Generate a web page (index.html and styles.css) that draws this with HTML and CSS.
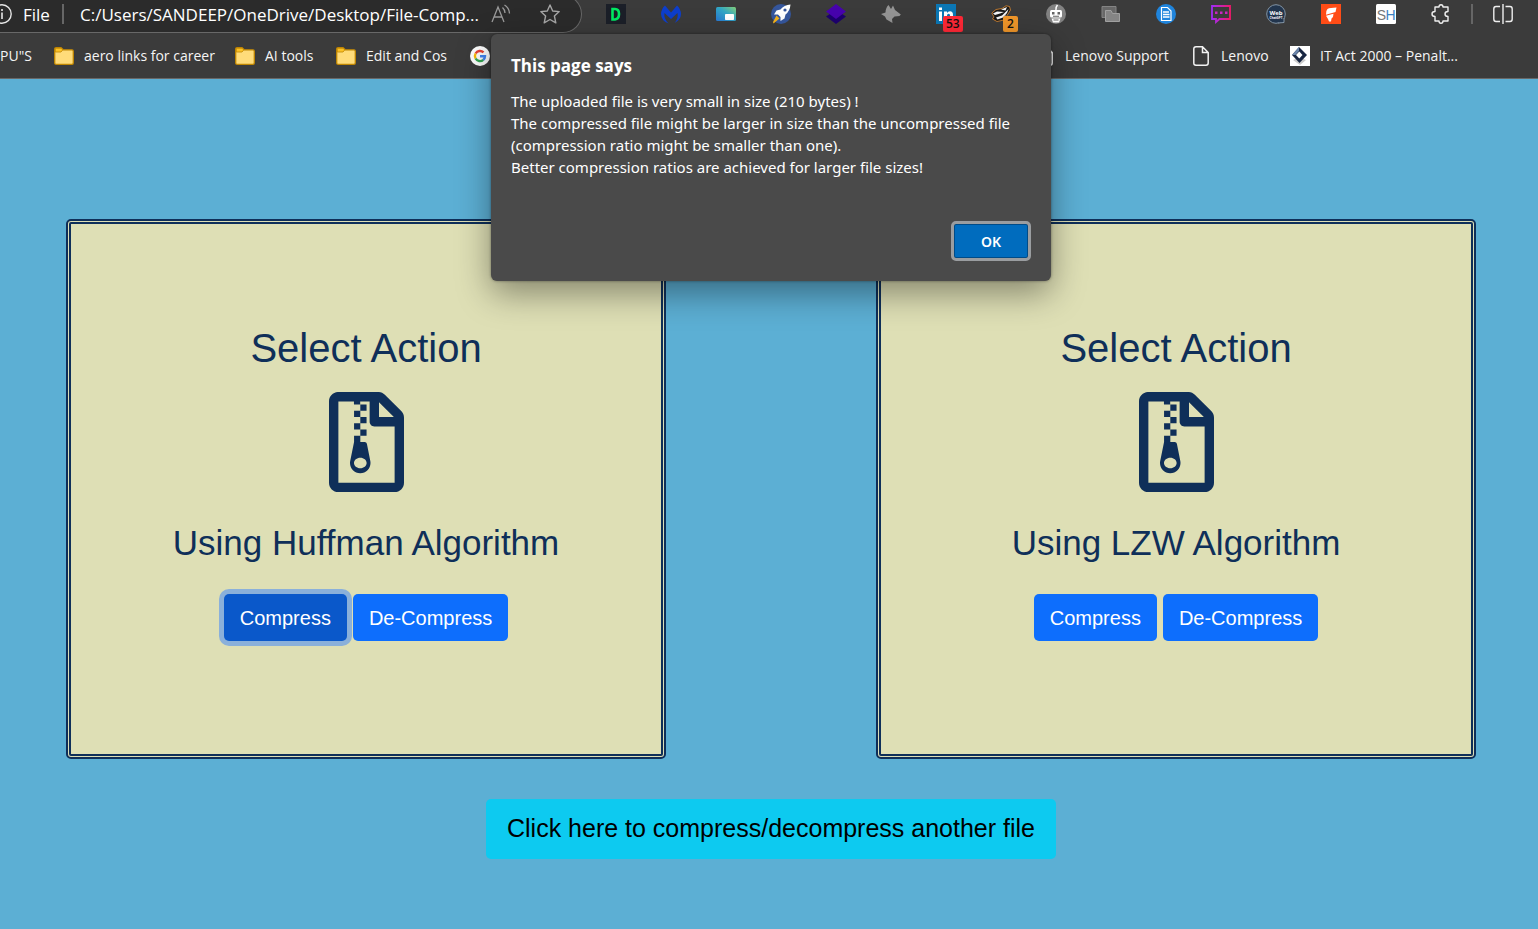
FILE: index.html
```html
<!DOCTYPE html>
<html lang="en">
<head>
<meta charset="utf-8">
<title>File Compressor</title>
<link rel="stylesheet" href="styles.css">
</head>
<body>
<svg class="defs" aria-hidden="true">
  <defs>
    <symbol id="folder" viewBox="0 0 20 18">
      <path d="M.7 2.200Q.7.700 2.200.7H7L9.200 2.800H18Q19.300 2.800 19.300 4.200V16Q19.300 17.300 18 17.300H2.200Q.7 17.300.7 16Z" fill="#ffdc7a" stroke="#bf8500" stroke-width="1.300"/>
      <path d="M1.300 1.300H7.500L8.700 3 7 5H1.300Z" fill="#fcc226" stroke="#bf8500" stroke-width=".8"/>
    </symbol>
    <symbol id="doc" viewBox="0 0 16 20">
      <path d="M3 .8H9.500L15.200 6.500V17Q15.200 19.200 13 19.200H3Q.8 19.200.8 17V3Q.8.800 3 .8ZM9.500.800V6.500H15.200" fill="none" stroke="#f2f2f2" stroke-width="1.500"/>
    </symbol>
    <symbol id="archive" viewBox="0 0 384 512">
      <path fill="currentColor" d="M128.3 160v32h32v-32zm64-96h-32v32h32zm-64 32v32h32V96zm64 32h-32v32h32zm177.600-30.100L286 14C277 5 264.800-.1 252.100-.1H48C21.500 0 0 21.500 0 48v416c0 26.500 21.500 48 48 48h288c26.500 0 48-21.500 48-48V131.900c0-12.700-5.100-25-14.100-34zM256 51.900l76.100 76.100H256zM336 464H48V48h79.700v16h32V48H208v104c0 13.300 10.700 24 24 24h104zM194.200 265.700c-1.100-5.600-6-9.700-11.800-9.700h-22.100v-32h-32v32l-19.700 97.100C102 385.600 126.800 416 160 416c33.100 0 57.900-30.200 51.500-62.600zm-33.900 124.400c-17.900 0-32.400-12.100-32.400-27s14.500-27 32.400-27 32.400 12.100 32.400 27-14.500 27-32.400 27zm32-198.100h-32v32h32z"/>
    </symbol>
  </defs>
</svg>

<header class="browser">
  <div class="toolbar">
    <div class="address">
      <svg class="ico" viewBox="0 0 20 20"><circle cx="10" cy="10" r="9.200" fill="none" stroke="#e6e6e6" stroke-width="1.400"/><path d="M10 8.500V15M10 5V7" stroke="#e6e6e6" stroke-width="1.600"/></svg>
      <span class="scheme">File</span>
      <span class="bar"></span>
      <span class="url">C:/Users/SANDEEP/OneDrive/Desktop/File-Comp...</span>
      <svg class="ico" viewBox="0 0 20 20" fill="none" stroke="#9a9a9a" stroke-width="1.300"><path d="M1 18 7 3 13 18M3.200 13H10.800M11.500 3.500Q13.800 5.500 14 9M13.500 1Q18.300 4 18.500 9.500"/></svg>
      <svg class="ico star" viewBox="0 0 20 20" fill="none" stroke="#a6a6a6" stroke-width="1.400" stroke-linejoin="round"><path d="M10 1 12.700 7 19.200 7.600 14.400 12 15.800 18.800 10 15.500 4.200 18.800 5.600 12 .8 7.600 7.300 7Z"/></svg>
    </div>
    <div class="extensions">
      <svg class="ico" viewBox="0 0 20 20"><path fill="#1b1f28" d="M0 0H20V20H0Z"/><path d="M6.500 5H9Q13 5 13 10T9 15.500H6.500Z" fill="none" stroke="#00ea62" stroke-width="2.600"/></svg>
      <svg class="ico" viewBox="0 0 20 20"><path fill="#0d3ecc" d="M4 1.500 10 8.500 16 1.500Q19.800 5 20 10 19.800 16 13.500 19 17.500 14.500 16.500 9L10 15 3.500 9Q2.500 14.500 7.500 19.500.3 17 0 10 .2 5 4 1.500Z"/></svg>
      <svg class="ico" viewBox="0 0 20 20"><defs><linearGradient id="pip" x1="0" y1="1" x2="1" y2="0"><stop stop-color="#2778d4"/><stop offset=".55" stop-color="#32a7c4"/><stop offset="1" stop-color="#83cf78"/></linearGradient></defs><rect y="3" width="20" height="14" rx="1.500" fill="url(#pip)"/><rect x="9" y="10" width="9" height="6" rx=".8" fill="#fff"/></svg>
      <svg class="ico" viewBox="0 0 20 20"><circle cx="10" cy="10" r="10" fill="#35569c"/><path fill="#fff" d="M19.500.500Q13 1 9.500 5.500L5.500 6.500 3 10.500 7 10.500 9.500 13 9.500 17 13.500 14.500 14.500 10.500Q19 7 19.500.500Z"/><circle cx="14" cy="6" r="1.600" fill="#35569c"/><path fill="#f5b31c" d="M5.500 11.500 8.500 14.500 2.500 19.500 2 18Z"/></svg>
      <svg class="ico" viewBox="0 0 20 20"><path fill="#1d006e" d="M0 12.500 10 6 20 12.500 10 20Z"/><path fill="#4703ad" d="M0 7.500 10 0 20 7.500 10 15Z"/></svg>
      <svg class="ico" viewBox="0 0 20 20"><path fill="#949494" d="M7.500 1 10 5 12 1.500 14 6 19.800 10.500 18.500 12 13.500 12.500 11 15 11.500 19 5.500 15.500 4 12.500 0 10 4.500 8.500Q4.500 4 7.500 1Z"/></svg>
      <span class="badged"><svg class="ico" viewBox="0 0 20 20"><path fill="#0b77b5" d="M0 0H20V20H0Z"/><path fill="#fff" d="M3 7.500H6V17H3ZM3 3.500H6V6H3ZM8 7.500H11V9Q12 7.300 14 7.300 17 7.300 17 11V17H14V11.500Q14 9.800 12.700 9.800 11 9.800 11 11.500V17H8Z"/></svg><span class="badge red">53</span></span>
      <span class="badged"><svg class="ico" viewBox="0 0 20 20"><path fill="#181818" stroke="#e08b32" stroke-width=".8" d="M.8 9 5 5.500 11 4.500 15 1.800 18.500 2.500 19.500 6 17 10 13 16 6 17.500 1.500 15 3 13Z"/><path fill="#f4f4f4" d="M2 9.500 6 7.500 13 8 9 9.500 4 11ZM10 5.500 16 3 14.500 6.500ZM5 13.500 11 11.500 17.500 5 16 9 12 13.500 6.500 15.500ZM13 13 15.500 10 12.500 15Z"/></svg><span class="badge amber">2</span></span>
      <svg class="ico" viewBox="0 0 20 20"><circle cx="10" cy="10" r="10" fill="#828282"/><path d="M10 6Q9.500 3 11.500 1" fill="none" stroke="#fff" stroke-width="1.600"/><rect x="4" y="6" width="12" height="7.500" rx="1.500" fill="#fff"/><path fill="#fff" d="M5.500 14.500H14.500L13 18.500H7Z"/><path fill="#666" d="M6 8H8.500V10.500H6ZM11.500 8H14V10.500H11.500ZM7 11.700H13V12.700H7ZM7.500 15.500H12.500V16.500H7.500Z"/></svg>
      <svg class="ico" viewBox="0 0 20 20"><path fill="#686868" stroke="#848484" d="M1 2.500H15V13.500H1Z"/><path fill="#858585" stroke="#a0a0a0" d="M4.500 6.500H10L11.500 9.500H18.500V17.500H4.500Z"/></svg>
      <svg class="ico" viewBox="0 0 20 20"><circle cx="10" cy="10" r="10" fill="#1f84dc"/><path fill="#1f84dc" stroke="#fff" stroke-width="1.200" d="M5.500 3.500H11.500L15 7V16.500H5.500Z"/><path stroke="#fff" stroke-width="1.300" d="M7 8H13M7 10.500H13.500M7 13H13.500"/></svg>
      <svg class="ico" viewBox="0 0 20 20"><defs><linearGradient id="chat"><stop stop-color="#a12cf5"/><stop offset="1" stop-color="#f2186c"/></linearGradient></defs><path fill="none" stroke="url(#chat)" stroke-width="1.800" d="M1 2H19V15H8.500L5 18V15H1Z"/><path fill="#ca24c2" d="M4 7.500H6.500V10H4ZM9 7.500H11.500V10H9ZM14 7.500H16.500V10H14Z"/></svg>
      <svg class="ico" viewBox="0 0 20 20"><circle cx="10" cy="10" r="9.300" fill="#22354d" stroke="#8294a5"/><path d="M12 19 18 18.500 18 14" fill="#22354d" stroke="#8294a5"/><text x="10" y="10.500" class="webtxt">Web</text><text x="10" y="14.500" class="gpttxt">ChatGPT</text></svg>
      <svg class="ico" viewBox="0 0 20 20"><path fill="#ff4c16" d="M0 0H20V20H0Z"/><path fill="#fff" d="M6.500 5Q9 3.500 15.500 3.500L14.500 8 5 10.800Q4.500 7 6.500 5ZM5 11.800 12.500 9.800 12 13 10.500 14.500 10 17.500H8L7 15Z"/></svg>
      <svg class="ico" viewBox="0 0 20 20"><rect width="20" height="20" rx="1.500" fill="#fff"/><text x="5.500" y="15.500" class="s-letter">S</text><text x="14.500" y="15.500" class="h-letter">H</text></svg>
      <svg class="ico" viewBox="0 0 20 20"><path fill="none" stroke="#eee" stroke-width="1.400" stroke-linejoin="round" d="M4 3H8Q8 .7 10 .7T12 3H17V7.500Q14 7.500 14 10T17 12.500V17H12Q12 19.300 10 19.300T8 17H4V12.500Q1 12.500 1 10T4 7.500Z"/></svg>
    </div>
    <div class="end">
      <span class="bar"></span>
      <svg class="ico" viewBox="0 0 20 20" fill="none" stroke="#eee" stroke-width="1.400"><path d="M7 2.500H3Q.8 2.500.8 5V15Q.8 17.500 3 17.500H7M10 0V20M12.500 2.500H17Q19.200 2.500 19.200 5V15Q19.200 17.500 17 17.500H12.500"/></svg>
    </div>
  </div>
  <nav class="bookmarks">
    <a href="#">PU"S</a>
    <a href="#"><svg class="folder"><use href="#folder"/></svg>aero links for career</a>
    <a href="#"><svg class="folder"><use href="#folder"/></svg>AI tools</a>
    <a href="#"><svg class="folder"><use href="#folder"/></svg>Edit and Cos</a>
    <a href="#" aria-label="Google"><svg class="ico" viewBox="0 0 20 20"><circle cx="10" cy="10" r="10" fill="#fff"/><g fill="none" stroke-width="2.400"><path d="M5.600 7.500A5 5 0 0 1 13.500 6.400" stroke="#ea4335"/><path d="M5.600 7.500A5 5 0 0 0 5.600 12.500" stroke="#fbbc05"/><path d="M5.600 12.500A5 5 0 0 0 13.300 13.800" stroke="#34a853"/><path d="M13.300 13.800A5 5 0 0 0 15 10.200H10" stroke="#4285f4"/></g></svg></a>
    <a href="#"><svg class="doc"><use href="#doc"/></svg>Lenovo Support</a>
    <a href="#"><svg class="doc"><use href="#doc"/></svg>Lenovo</a>
    <a href="#"><svg class="ico" viewBox="0 0 20 20"><path fill="#fff" d="M0 0H20V20H0Z"/><path fill="#ccc" d="M3 14 10 11 16 14 10 19Z"/><path fill="#182642" d="M9 1 17 9 9.500 17 2 9Z"/><path fill="#6b86ac" d="M9 1 2 9 5.500 9 9 5Z"/><path fill="#fff" d="M9.300 5.500 12.500 9 9.300 12.500 6 9Z"/></svg>IT Act 2000 – Penalt...</a>
  </nav>
</header>

<main class="page">
  <div class="cards">
    <section class="card">
      <h1>Select Action</h1>
      <svg class="archive"><use href="#archive"/></svg>
      <h2>Using Huffman Algorithm</h2>
      <div class="actions">
        <button type="button" class="btn active">Compress</button>
        <button type="button" class="btn">De-Compress</button>
      </div>
    </section>
    <section class="card">
      <h1>Select Action</h1>
      <svg class="archive"><use href="#archive"/></svg>
      <h2>Using LZW Algorithm</h2>
      <div class="actions">
        <button type="button" class="btn">Compress</button>
        <button type="button" class="btn">De-Compress</button>
      </div>
    </section>
  </div>
  <button type="button" class="again">Click here to compress/decompress another file</button>
</main>

<div class="alert" role="alertdialog" aria-labelledby="alert-title">
  <strong id="alert-title">This page says</strong>
  <p>The uploaded file is very small in size (210 bytes) !<br>The compressed file might be larger in size than the uncompressed file<br>(compression ratio might be smaller than one).<br>Better compression ratios are achieved for larger file sizes!</p>
  <button type="button" class="ok">OK</button>
</div>
</body>
</html>
```
FILE: styles.css
```css
* { box-sizing: border-box; }
body {
  margin: 0;
  min-height: 100vh;
  display: flex;
  flex-direction: column;
  background: #5cafd4;
  font-family: "Liberation Sans", Arial, sans-serif;
}
button { font-family: inherit; border: 0; cursor: pointer; }
.defs { position: absolute; width: 0; height: 0; }

.browser {
  background: #3b3b3b;
  border-bottom: 1px solid #686868;
  color: #f5f5f5;
  font-family: "Open Sans", "Noto Sans", sans-serif;
  overflow: hidden;
}
.toolbar { display: flex; height: 33px; align-items: flex-start; }
.ico { width: 20px; height: 20px; flex: none; display: block; }
.bar { width: 2px; height: 20px; background: #666; flex: none; }
.address {
  flex: none;
  width: 590px;
  height: 38px;
  margin: -5px 0 0 -8px;
  padding: 0 21px 0 0;
  display: flex;
  align-items: center;
  background: #2b2b2b;
  border: 1px solid #686868;
  border-left: 0;
  border-radius: 0 19px 19px 0;
  font-size: 17px;
  color: #fff;
  white-space: nowrap;
}
.scheme { width: 39px; margin-left: 11px; }
.url { flex: 1; margin-left: 16px; }
.star { margin-left: 29px; }
.extensions {
  flex: 1;
  display: flex;
  justify-content: space-between;
  padding: 4px 20px 0 24px;
}
.end { display: flex; gap: 20px; padding: 4px 25px 0 0; }
.badged { position: relative; }
.badge {
  position: absolute;
  left: 7px;
  top: 12px;
  height: 16px;
  padding: 0 3px;
  border-radius: 2px;
  color: #111;
  font-size: 12px;
  font-weight: 600;
  line-height: 16px;
}
.red { background: #ff2836; }
.amber { background: #f0962a; left: 12px; padding: 0 4px; }
.webtxt, .gpttxt { fill: #fff; text-anchor: middle; font-weight: 700; font-size: 6px; }
.gpttxt { font-size: 3px; }
.s-letter, .h-letter { text-anchor: middle; font-family: "Liberation Sans", sans-serif; font-size: 14px; fill: #777; }
.h-letter { fill: #3c83c4; }

.bookmarks {
  display: grid;
  grid-template-columns: 54px 181px 101px 134px 1fr 156px 97px 248px;
  height: 45px;
  align-items: center;
}
.bookmarks a {
  display: flex;
  align-items: center;
  gap: 10px;
  color: inherit;
  font-size: 14px;
  line-height: 20px;
  text-decoration: none;
  white-space: nowrap;
}
.folder { width: 20px; height: 18px; flex: none; }
.doc { width: 16px; height: 20px; margin-right: 2px; flex: none; }

.page {
  flex: 1;
  display: flex;
  flex-direction: column;
  align-items: center;
  gap: 40px;
  padding: 140px 0 70px 4px;
  color: #0f2f59;
}
.cards { display: flex; gap: 210px; }
.card {
  width: 600px;
  padding: 100px 20px 113px;
  display: flex;
  flex-direction: column;
  align-items: center;
  background: #dedfb5;
  border: 5px double #0f2f59;
  border-radius: 5px;
}
.card h1, .card h2 { margin: 0; font-weight: 400; }
.card h1 { font-size: 40px; line-height: 48px; }
.card h2 { font-size: 35px; line-height: 42px; }
.archive { width: 75px; height: 100px; margin: 20px 0 30px; }
.actions { display: flex; gap: 6px; margin-top: 30px; }
.btn {
  padding: 9px 16px 8px;
  border-radius: 5px;
  background: #0d6efd;
  color: #fff;
  font-size: 20px;
  line-height: 30px;
}
.btn.active { background: #0a58ca; box-shadow: 0 0 0 5px #8ab0da; }
.again {
  padding: 10px 21px 12px;
  border-radius: 5px;
  background: #0dcaf0;
  color: #000;
  font-size: 25px;
  line-height: 38px;
}

.alert {
  position: absolute;
  top: 34px;
  left: 491px;
  width: 560px;
  padding: 20px;
  display: flex;
  flex-direction: column;
  background: #4a4a4a;
  border-radius: 6px;
  box-shadow: 0 12px 34px rgba(0, 0, 0, .4), 0 0 3px rgba(0, 0, 0, .4);
  color: #fff;
  font-family: "Noto Sans", "Open Sans", sans-serif;
  font-size: 15px;
}
.alert strong { font-family: "Open Sans", sans-serif; font-size: 17px; line-height: 24px; }
.alert p { margin: 12px 0 46px; line-height: 22px; white-space: nowrap; }
.ok {
  align-self: flex-end;
  width: 74px;
  height: 34px;
  margin: 0 3px 3px 0;
  background: #006cbe;
  border: 1px solid #004b87;
  border-radius: 2px;
  outline: 3px solid #9a9da0;
  color: #fff;
  font-size: 14px;
  font-weight: 600;
}
```
